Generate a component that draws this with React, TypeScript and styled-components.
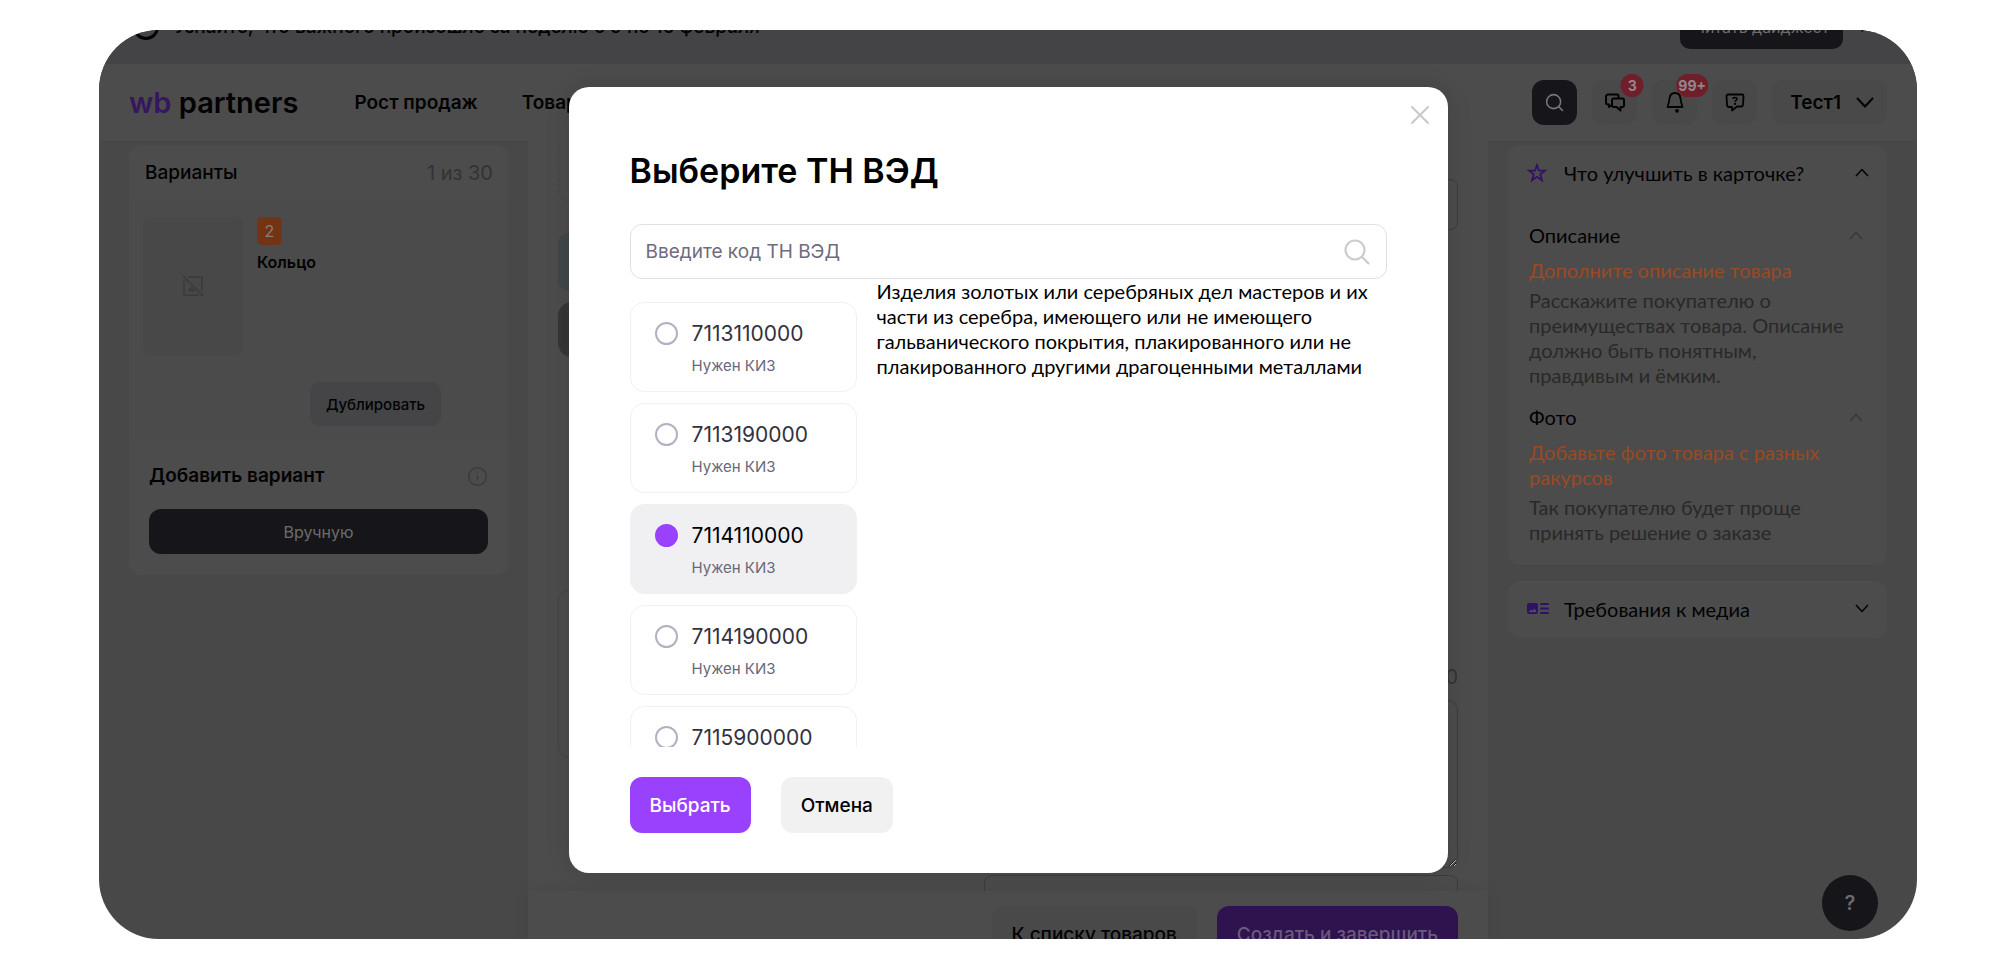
import React, { useState } from "react";
import styled, { createGlobalStyle } from "styled-components";
import { Info, Search, X } from "lucide-react";

const ui = `Inter, "Liberation Sans", sans-serif`;
const text = `Lato, "Open Sans", sans-serif`;

const color = {
  page: "#484848",
  surface: "#4c4c4c",
  soft: "#494949",
  line: "#3c3c3c",
  faintLine: "#434343",
  ink: "#020202",
  muted: "#333333",
  dark: "#16161a",
  onDark: "#6c6c6e",
  orange: "#9a4a24",
  violetDim: "#2e134f",
  violet: "#9a41fe",
};

const GlobalStyle = createGlobalStyle`
  *, *::before, *::after { box-sizing: border-box; }
  body { margin: 0; background: #fff; font-family: ${ui}; }
  button, input, textarea { font-family: inherit; margin: 0; }
  h1, h2, h3, p, ul { margin: 0; padding: 0; font-weight: inherit; font-size: inherit; }
`;

const Stage = styled.div`
  height: 100vh;
  padding: 30px 99px;
`;

const Frame = styled.div`
  position: relative;
  display: flex;
  flex-direction: column;
  height: 100%;
  overflow: hidden;
  border-radius: 60px;
  background: ${color.page};
  color: ${color.ink};
`;

const Banner = styled.div`
  display: flex;
  align-items: center;
  flex: none;
  gap: 15px;
  height: 74px;
  margin-top: -40px;
  padding: 0 43px 0 34px;
  background: #444446;
  font-size: 19px;
  font-weight: 500;
`;

const BannerMark = styled.span`
  width: 26px;
  height: 26px;
  border: 3px solid ${color.ink};
  border-radius: 50%;
`;

const BannerText = styled.span`
  flex: 1;
  line-height: 24px;
`;

const BannerButton = styled.button`
  width: 163px;
  height: 44px;
  padding: 0;
  border: 0;
  border-radius: 10px;
  background: ${color.dark};
  color: ${color.onDark};
  font-size: 16px;
`;

const PlainButton = styled.button`
  display: flex;
  padding: 0;
  border: 0;
  background: none;
  color: inherit;
`;

const Header = styled.header`
  display: flex;
  align-items: center;
  flex: none;
  height: 77px;
  padding: 0 30px;
  background: ${color.surface};
`;

const Logo = styled.a`
  color: ${color.ink};
  font-size: 29px;
  font-weight: 600;
  line-height: 32px;
  text-decoration: none;

  span { color: #35165f; }
`;

const Nav = styled.nav`
  display: flex;
  flex: 1;
  gap: 44px;
  margin-left: 56px;
`;

const NavLink = styled.a`
  color: ${color.ink};
  font-size: 19px;
  font-weight: 600;
  text-decoration: none;
`;

const Actions = styled.div`
  display: flex;
  gap: 15px;
`;

const IconButton = styled.button<{ $dark?: boolean }>`
  position: relative;
  display: grid;
  place-items: center;
  width: 45px;
  height: 45px;
  padding: 0;
  border: 0;
  border-radius: 12px;
  background: ${(p) => (p.$dark ? color.dark : color.soft)};
  color: ${(p) => (p.$dark ? "#77777a" : color.ink)};
`;

const Counter = styled.span`
  position: absolute;
  top: -6px;
  left: 40px;
  min-width: 23px;
  height: 23px;
  padding: 0 2px;
  border-radius: 12px;
  background: #6f1f2a;
  color: #96858a;
  font-size: 14px;
  font-weight: 700;
  line-height: 23px;
  transform: translateX(-50%);
`;

const Account = styled.button`
  display: flex;
  align-items: center;
  justify-content: space-between;
  gap: 15px;
  height: 45px;
  padding: 0 13px 0 18px;
  border: 0;
  border-radius: 12px;
  background: ${color.soft};
  color: ${color.ink};
  font-size: 19px;
  font-weight: 600;
`;

const Columns = styled.div`
  display: grid;
  grid-template-columns: 379px minmax(0, 1fr) 379px;
  gap: 20px;
  flex: 1;
  min-height: 0;
  padding: 0 30px;
`;

const Side = styled.aside`
  display: flex;
  flex-direction: column;
  gap: 16px;
  padding-top: 4px;
`;

const Card = styled.section`
  border-radius: 12px;
  background: ${color.surface};
`;

const VariantsHead = styled.div`
  display: flex;
  align-items: center;
  justify-content: space-between;
  height: 55px;
  padding: 0 15px 0 16px;
  font-size: 19px;
  font-weight: 500;
`;

const Quiet = styled.span`
  color: ${color.muted};
  font-size: 20px;
  font-weight: 400;
`;

const Variant = styled.div`
  display: flex;
  gap: 14px;
  height: 240px;
  padding: 17px 14px 14px;
  background: #4b4b4b;
`;

const Photo = styled.div`
  display: grid;
  place-items: center;
  width: 100px;
  height: 138px;
  border-radius: 8px;
  background: #484848;
  color: #3d3d3d;
`;

const VariantInfo = styled.div`
  display: flex;
  flex: 1;
  flex-direction: column;
  align-items: flex-start;
  gap: 7px;
`;

const OrderBadge = styled.span`
  width: 25px;
  height: 28px;
  border-radius: 5px;
  background: #733416;
  color: #858079;
  font-size: 16px;
  line-height: 28px;
  text-align: center;
`;

const VariantName = styled.h3`
  font-size: 16px;
  font-weight: 600;
  line-height: 20px;
`;

const CopyButton = styled.button`
  align-self: center;
  height: 44px;
  margin-top: auto;
  padding: 0 16px;
  border: 0;
  border-radius: 10px;
  background: #454547;
  color: ${color.ink};
  font-size: 15px;
  font-weight: 500;
`;

const AddVariant = styled.div`
  padding: 24px 20px 21px;
`;

const AddHead = styled.div`
  display: flex;
  align-items: center;
  justify-content: space-between;
  margin-bottom: 21px;
  font-size: 19px;
  font-weight: 600;
  line-height: 24px;
`;

const WideButton = styled.button`
  width: 100%;
  height: 45px;
  border: 0;
  border-radius: 12px;
  background: ${color.dark};
  color: ${color.onDark};
  font-size: 16px;
`;

const Main = styled.main`
  display: flex;
  flex-direction: column;
  min-height: 0;
  background: ${color.surface};
`;

const Form = styled.div`
  display: grid;
  grid-template-columns: minmax(0, 1fr) 474px;
  gap: 20px;
  flex: 1;
  min-height: 0;
  overflow: hidden;
  padding: 0 30px;
`;

const FormColumn = styled.div`
  display: flex;
  flex-direction: column;
`;

const DropZone = styled.div`
  height: 60px;
  border: 1px dashed ${color.faintLine};
  border-top: 0;
  border-radius: 0 0 12px 12px;
`;

const Notice = styled.div`
  height: 58px;
  margin-top: 32px;
  border-radius: 10px;
  background: #414649;
`;

const Segment = styled.div`
  height: 55px;
  margin-top: 11px;
  border-radius: 14px;
  background: #363636;
`;

const FieldBox = styled.input<{ $gap: number }>`
  flex: none;
  width: 100%;
  height: 51px;
  margin-top: ${(p) => p.$gap}px;
  border: 1px solid ${color.line};
  border-radius: 8px;
  background: none;
`;

const Limit = styled.span`
  align-self: flex-end;
  margin-top: 435px;
  color: ${color.muted};
  font-size: 20px;
  line-height: 24px;
`;

const TextField = styled.textarea<{ $gap: number; $faint?: boolean }>`
  flex: none;
  width: 100%;
  height: 168px;
  margin-top: ${(p) => p.$gap}px;
  border: 1px solid ${(p) => (p.$faint ? color.faintLine : color.line)};
  border-radius: 10px;
  background: none;
`;

const Footer = styled.footer`
  display: flex;
  justify-content: flex-end;
  flex: none;
  gap: 20px;
  height: 48px;
  padding: 15px 30px 0;
  background: ${color.surface};
  box-shadow: 0 0 16px rgba(0, 0, 0, 0.08);
`;

const FooterButton = styled.button<{ $primary?: boolean }>`
  height: 56px;
  padding: 0 20px;
  border: 0;
  border-radius: 12px;
  background: ${(p) => (p.$primary ? color.violetDim : color.soft)};
  color: ${(p) => (p.$primary ? "#6a5a7b" : color.ink)};
  font-size: 19px;
  font-weight: 500;
  white-space: nowrap;
`;

const PanelHead = styled.button`
  display: grid;
  grid-template-columns: 20px 1fr 14px;
  align-items: center;
  gap: 17px;
  width: 100%;
  height: 57px;
  padding: 0 18px 2px 19px;
  border: 0;
  background: none;
  color: ${color.ink};
  font-family: ${text};
  font-size: 20px;
  text-align: left;
`;

const PanelBody = styled.div`
  display: flex;
  flex-direction: column;
  gap: 9px;
  padding: 13px 24px 20px 21px;
  font-family: ${text};
  font-size: 20px;
  line-height: 25px;
`;

const TipHead = styled.button`
  display: flex;
  align-items: center;
  justify-content: space-between;
  width: 100%;
  height: 40px;
  padding: 0;
  border: 0;
  background: ${color.surface};
  color: ${color.ink};
  font-family: ${text};
  font-size: 20px;

  svg { color: #383838; }
`;

const TipTitle = styled.p`
  margin: 3px 0 5px;
  color: ${color.orange};
`;

const TipText = styled.p`
  padding-right: 16px;
  color: #292929;
`;

const HelpButton = styled.button`
  position: absolute;
  right: 39px;
  bottom: 8px;
  width: 56px;
  height: 56px;
  border: 0;
  border-radius: 50%;
  background: ${color.dark};
  color: #6a6a6e;
  font-size: 20px;
  font-weight: 600;
`;

const Overlay = styled.div`
  position: absolute;
  inset: 0;
  display: flex;
  justify-content: center;
  padding: 57px 20px 66px;
`;

const Dialog = styled.section`
  position: relative;
  display: flex;
  flex-direction: column;
  width: 100%;
  max-width: 879px;
  padding: 62px 61px 40px;
  border-radius: 20px;
  background: #fff;
  color: #000;
  box-shadow: 0 0 24px rgba(0, 0, 0, 0.12);
`;

const CloseButton = styled.button`
  position: absolute;
  top: 12px;
  right: 12px;
  padding: 0;
  border: 0;
  background: none;
  color: #c8c8cc;
  line-height: 0;
`;

const Title = styled.h1`
  font-size: 34px;
  font-weight: 600;
  line-height: 44px;
`;

const SearchBox = styled.label`
  display: flex;
  align-items: center;
  flex: none;
  height: 55px;
  margin-top: 31px;
  padding: 0 16px 0 15px;
  border: 1px solid #e0e0e5;
  border-radius: 12px;
  color: #cbcbd0;
`;

const SearchInput = styled.input`
  flex: 1;
  min-width: 0;
  padding: 0;
  border: 0;
  outline: 0;
  background: none;
  color: #000;
  font-size: 19px;

  &::placeholder { color: #6f6b80; opacity: 1; }
`;

const Body = styled.div`
  display: flex;
  align-items: flex-start;
  flex: 1;
  gap: 20px;
  min-height: 0;
`;

const Codes = styled.div`
  display: flex;
  flex: none;
  flex-direction: column;
  gap: 11px;
  width: 227px;
  height: 100%;
  padding-top: 23px;
  overflow: hidden;
`;

const Code = styled.label<{ $on: boolean }>`
  display: flex;
  flex: none;
  gap: 14px;
  height: 90px;
  padding: 19px 24px;
  border: 1px solid ${(p) => (p.$on ? "#f0f0f3" : "#f1f1f3")};
  border-radius: 14px;
  background: ${(p) => (p.$on ? "#f0f0f3" : "#fff")};
  color: ${(p) => (p.$on ? "#000" : "#33323e")};
`;

const Radio = styled.input`
  appearance: none;
  flex: none;
  width: 23px;
  height: 23px;
  border: 2px solid #b3b1c1;
  border-radius: 50%;

  &:checked { border-color: ${color.violet}; background: ${color.violet}; }
`;

const CodeText = styled.span`
  display: flex;
  flex-direction: column;
  gap: 10px;
  font-size: 21px;
  line-height: 24px;
`;

const CodeNote = styled.span`
  color: #6a6878;
  font-size: 15px;
  line-height: 20px;
`;

const Description = styled.p`
  flex: 1;
  min-width: 0;
  font-family: ${text};
  font-size: 20px;
  line-height: 25px;
`;

const Buttons = styled.div`
  display: flex;
  flex: none;
  gap: 30px;
  margin-top: 30px;
`;

const DialogButton = styled.button<{ $primary?: boolean }>`
  height: 56px;
  padding: 0 20px;
  border: 0;
  border-radius: 12px;
  background: ${(p) => (p.$primary ? color.violet : "#f1f1f1")};
  color: ${(p) => (p.$primary ? "#fff" : "#000")};
  font-size: 19px;
  font-weight: 500;
`;

const Chevron = ({ up, width = 14, weight = 1.5 }: { up?: boolean; width?: number; weight?: number }) => (
  <svg width={width} height={width / 2 + 2} viewBox={`0 0 ${width} ${width / 2 + 2}`} fill="none" stroke="currentColor" strokeWidth={weight}>
    <path
      d={
        up
          ? `M1 ${width / 2 + 1} L${width / 2} 1.500 L${width - 1} ${width / 2 + 1}`
          : `M1 1 L${width / 2} ${width / 2 + 0.5} L${width - 1} 1`
      }
    />
  </svg>
);

const StarIcon = () => (
  <svg width="20" height="20" viewBox="0 0 20 20" fill="none" stroke="#2f1263" strokeWidth="1.800">
    <path d="M10 2.200 L12 7.600 H18 L13.300 11.300 L15 17.300 L10 13.800 L5 17.300 L6.700 11.300 L2 7.600 H8 Z" />
  </svg>
);

const NoPhotoIcon = () => (
  <svg width="22" height="22" viewBox="0 0 22 22" fill="none" stroke="currentColor" strokeWidth="2">
    <path d="M6 2 H20 V16" />
    <path d="M2 5 V20 H17" />
    <path d="M1 1 L21 21" />
    <path d="M6 16 L9 12 L13 16 Z" fill="currentColor" strokeWidth="1" />
  </svg>
);

const ChatIcon = () => (
  <svg width="20" height="19" viewBox="0 0 20 19" fill="none" stroke="currentColor" strokeWidth="2" strokeLinejoin="round">
    <path d="M13.500 5 V3 A1.500 1.500 0 0 0 12 1.500 H3 A2 2 0 0 0 1 3.500 V9.500 A2 2 0 0 0 3 11.500 H4 V14 L7 12" />
    <path d="M9 5.500 H17.500 A1.500 1.500 0 0 1 19 7 V12.500 A1.500 1.500 0 0 1 17.500 14 H15.500 V17.500 L11.500 14 H9 A2 2 0 0 1 7 12 V7.500 A2 2 0 0 1 9 5.500 Z" />
  </svg>
);

const BellIcon = () => (
  <svg width="18" height="21" viewBox="0 0 18 21" fill="none" stroke="currentColor" strokeWidth="1.800" strokeLinejoin="round">
    <path d="M9 1 C5.500 1 3.800 3.500 3.500 6.500 C3.200 10 2.800 11 1.500 15 H16.500 C15.200 11 14.800 10 14.500 6.500 C14.200 3.500 12.500 1 9 1 Z" />
    <circle cx="11" cy="18.800" r="1.900" fill="currentColor" stroke="none" />
  </svg>
);

const QuestionIcon = () => (
  <svg width="20" height="19" viewBox="0 0 20 19" fill="none" stroke="currentColor" strokeWidth="1.800" strokeLinejoin="round">
    <path d="M3 1.500 H17 A1.500 1.500 0 0 1 18.500 3 L18 12 A2 2 0 0 1 16 13.500 H12 L7 17.500 V14 H4 A2 2 0 0 1 2 12 L1.500 3 A1.500 1.500 0 0 1 3 1.500 Z" />
    <path d="M8 6 C8 4 12 4 12 6 C12 7.300 10 7.300 10 8.800" strokeWidth="1.600" />
    <circle cx="10" cy="10.900" r="1.100" fill="currentColor" stroke="none" />
  </svg>
);

const MediaIcon = () => (
  <svg width="22" height="12" viewBox="0 0 22 12" fill="#2f1263">
    <rect width="11" height="11" rx="2" />
    <path d="M2 9 L4 6.500 L5.500 8 L7.500 5.500 L9.500 9 z" fill="#57505f" />
    <rect x="13" y="0" width="9" height="2" rx="1" />
    <rect x="13" y="4.500" width="9" height="2" rx="1" />
    <rect x="13" y="9" width="9" height="2" rx="1" />
  </svg>
);

const codes = ["7113110000", "7113190000", "7114110000", "7114190000", "7115900000"];

export default function App() {
  const [selected, setSelected] = useState("7114110000");

  return (
    <Stage>
      <GlobalStyle />
      <Frame>
        <Banner>
          <BannerMark />
          <BannerText>Узнайте, что важного произошло за неделю с 9 по 15 февраля</BannerText>
          <BannerButton type="button">Читать дайджест</BannerButton>
          <PlainButton type="button" aria-label="Скрыть">
            <X size={16} />
          </PlainButton>
        </Banner>

        <Header>
          <Logo href="#home">
            <span>wb</span> partners
          </Logo>
          <Nav>
            <NavLink href="#growth">Рост продаж</NavLink>
            <NavLink href="#goods">Товары</NavLink>
          </Nav>
          <Actions>
            <IconButton type="button" $dark aria-label="Поиск">
              <Search size={21} strokeWidth={1.75} />
            </IconButton>
            <IconButton type="button" aria-label="Сообщения">
              <ChatIcon />
              <Counter>3</Counter>
            </IconButton>
            <IconButton type="button" aria-label="Уведомления">
              <BellIcon />
              <Counter>99+</Counter>
            </IconButton>
            <IconButton type="button" aria-label="Справка">
              <QuestionIcon />
            </IconButton>
            <Account type="button">
              Тест1
              <Chevron width={18} weight={2} />
            </Account>
          </Actions>
        </Header>

        <Columns>
          <Side>
            <Card>
              <VariantsHead>
                <h2>Варианты</h2>
                <Quiet>1 из 30</Quiet>
              </VariantsHead>
              <Variant>
                <Photo>
                  <NoPhotoIcon />
                </Photo>
                <VariantInfo>
                  <OrderBadge>2</OrderBadge>
                  <VariantName>Кольцо</VariantName>
                  <CopyButton type="button">Дублировать</CopyButton>
                </VariantInfo>
              </Variant>
              <AddVariant>
                <AddHead>
                  <h2>Добавить вариант</h2>
                  <Info size={21} strokeWidth={1.75} color="#3b3b3b" />
                </AddHead>
                <WideButton type="button">Вручную</WideButton>
              </AddVariant>
            </Card>
          </Side>

          <Main>
            <Form>
              <FormColumn>
                <DropZone />
                <Notice />
                <Segment />
                <TextField $gap={233} $faint aria-label="Наименование" />
              </FormColumn>
              <FormColumn>
                <FieldBox $gap={38} aria-label="Артикул" />
                <Limit>5000</Limit>
                <TextField $gap={11} aria-label="Описание" />
                <FieldBox $gap={7} aria-label="Бренд" />
              </FormColumn>
            </Form>
            <Footer>
              <FooterButton type="button">К списку товаров</FooterButton>
              <FooterButton type="button" $primary>
                Создать и завершить
              </FooterButton>
            </Footer>
          </Main>

          <Side>
            <Card>
              <PanelHead type="button">
                <StarIcon />
                Что улучшить в карточке?
                <Chevron up />
              </PanelHead>
              <PanelBody>
                <div>
                  <TipHead type="button">
                    Описание
                    <Chevron up />
                  </TipHead>
                  <TipTitle>Дополните описание товара</TipTitle>
                  <TipText>
                    Расскажите покупателю о преимуществах товара. Описание должно быть понятным, правдивым и ёмким.
                  </TipText>
                </div>
                <div>
                  <TipHead type="button">
                    Фото
                    <Chevron up />
                  </TipHead>
                  <TipTitle>Добавьте фото товара с разных ракурсов</TipTitle>
                  <TipText>Так покупателю будет проще принять решение о заказе</TipText>
                </div>
              </PanelBody>
            </Card>
            <Card>
              <PanelHead type="button">
                <MediaIcon />
                Требования к медиа
                <Chevron />
              </PanelHead>
            </Card>
          </Side>
        </Columns>

        <HelpButton type="button" aria-label="Помощь">?</HelpButton>

        <Overlay>
          <Dialog role="dialog" aria-modal="true" aria-labelledby="dialog-title">
            <CloseButton type="button" aria-label="Закрыть">
              <X size={32} strokeWidth={1.5} />
            </CloseButton>
            <Title id="dialog-title">Выберите ТН ВЭД</Title>
            <SearchBox>
              <SearchInput type="text" placeholder="Введите код ТН ВЭД" aria-label="Введите код ТН ВЭД" />
              <svg width="26" height="26" viewBox="0 0 26 26" fill="none" stroke="currentColor" strokeWidth="2.200">
                <circle cx="11" cy="11" r="9.500" />
                <path d="M17.800 17.800 L25 25" />
              </svg>
            </SearchBox>
            <Body>
              <Codes role="radiogroup" aria-label="Код ТН ВЭД">
                {codes.map((code) => (
                  <Code key={code} $on={code === selected}>
                    <Radio
                      type="radio"
                      name="code"
                      value={code}
                      checked={code === selected}
                      onChange={() => setSelected(code)}
                    />
                    <CodeText>
                      {code}
                      <CodeNote>Нужен КИЗ</CodeNote>
                    </CodeText>
                  </Code>
                ))}
              </Codes>
              <Description>
                Изделия золотых или серебряных дел мастеров и их части из серебра, имеющего или не имеющего
                гальванического покрытия, плакированного или не плакированного другими драгоценными металлами
              </Description>
            </Body>
            <Buttons>
              <DialogButton type="button" $primary>
                Выбрать
              </DialogButton>
              <DialogButton type="button">Отмена</DialogButton>
            </Buttons>
          </Dialog>
        </Overlay>
      </Frame>
    </Stage>
  );
}
